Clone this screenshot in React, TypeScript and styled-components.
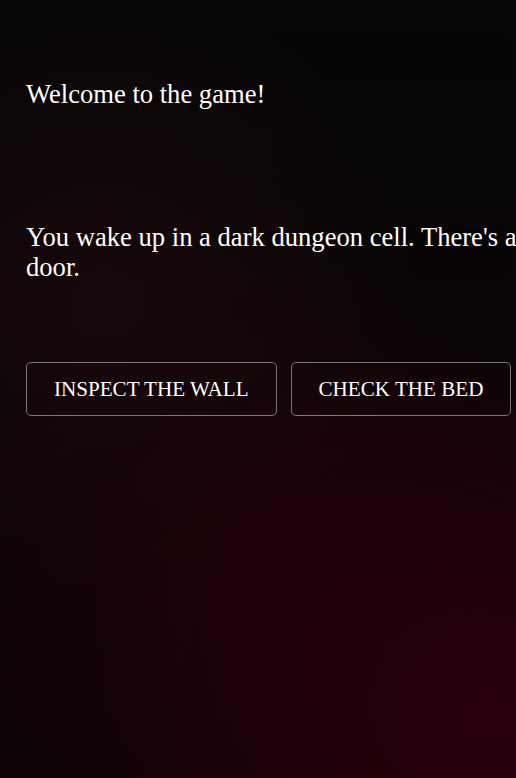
import React from "react";
import styled, { createGlobalStyle } from "styled-components";

const Global = createGlobalStyle`
  html, body {
    margin: 0;
    padding: 0;
    background: #050505;
    overflow: hidden;
  }
  * { box-sizing: border-box; }
`;

const Page = styled.div`
  width: 516px;
  min-height: 778px;
  overflow: hidden;
  padding: 79px 0 0 26px;
  font-family: "Liberation Serif", "Times New Roman", serif;
  color: #ffffff;
  background:
    radial-gradient(ellipse 80% 50% at 95% 92%, rgba(42, 0, 12, 1) 0%, rgba(42, 0, 12, 0) 100%),
    radial-gradient(ellipse 60% 40% at 20% 38%, rgba(24, 8, 12, 0.9) 0%, rgba(24, 8, 12, 0) 100%),
    radial-gradient(ellipse 60% 40% at 50% 70%, rgba(28, 2, 9, 0.9) 0%, rgba(28, 2, 9, 0) 100%),
    linear-gradient(180deg, #060606 0%, #0a0405 50%, #0e0205 100%);
`;

const Content = styled.div`
  width: 610px;
`;

const Title = styled.p`
  margin: 0 0 113px;
  font-size: 26.6px;
  line-height: 30px;
`;

const Story = styled.p`
  margin: 0 0 80px;
  font-size: 26.6px;
  line-height: 30px;
`;

const Choices = styled.div`
  display: flex;
  gap: 14px;
`;

const Choice = styled.button`
  font-family: "Liberation Serif", "Times New Roman", serif;
  font-size: 21.1px;
  line-height: 24px;
  color: #ffffff;
  text-transform: uppercase;
  background: transparent;
  border: 1px solid #7a7676;
  border-radius: 5px;
  padding: 14px 27px;
  cursor: pointer;
`;

export default function App() {
  return (
    <>
      <Global />
      <Page>
        <Content>
          <Title>Welcome to the game!</Title>
          <Story>You wake up in a dark dungeon cell. There's a locked door.</Story>
          <Choices>
            <Choice>Inspect the wall</Choice>
            <Choice>Check the bed</Choice>
          </Choices>
        </Content>
      </Page>
    </>
  );
}
